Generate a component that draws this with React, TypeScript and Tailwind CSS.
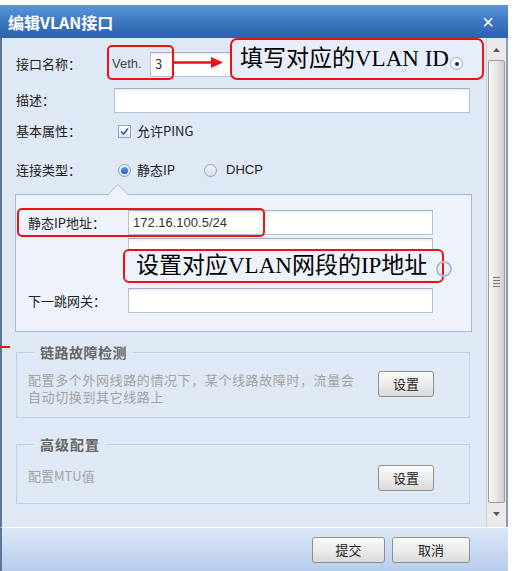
import React from "react";

const cjk = { fontFamily: '"Noto Sans CJK SC", "Liberation Sans", sans-serif' };
const note = { fontFamily: '"Liberation Serif", "Noto Sans CJK SC", serif' };

function Field({ className = "", children }: { className?: string; children?: React.ReactNode }) {
  return (
    <div
      className={`h-[25px] bg-white border border-[#b4c2d4] border-t-[#9fb0c6] shadow-[inset_0_2px_2px_rgba(0,0,0,0.06)] flex items-center px-[4px] text-[13px] text-[#333] ${className}`}
    >
      {children}
    </div>
  );
}

function Btn({ label, w }: { label: string; w: string }) {
  return (
    <div
      className={`${w} h-[26px] rounded-[3px] border border-[#8f8f8f] bg-gradient-to-b from-[#fbfbfb] via-[#ececec] to-[#d9d9d9] flex items-center justify-center text-[13px] text-[#222] shadow-[inset_0_1px_0_#fff]`}
    >
      {label}
    </div>
  );
}

function Radio({ on }: { on?: boolean }) {
  return (
    <div className="w-[13px] h-[13px] rounded-full border border-[#8da2bf] bg-gradient-to-b from-[#f2f2f2] to-[#d9dde3] flex items-center justify-center">
      {on && <div className="w-[7px] h-[7px] rounded-full bg-gradient-to-b from-[#5fa3e8] to-[#1d5fb3]" />}
    </div>
  );
}

export default function App() {
  return (
    <div className="relative w-[519px] h-[571px] bg-white overflow-hidden" style={cjk}>
      <div className="pt-[5px] w-[508px]">
        {/* title bar */}
        <div className="h-[33px] bg-gradient-to-b from-[#5d97d9] via-[#3d77c2] to-[#2d62ac] flex items-center justify-between pl-[8px] pr-[14px]">
          <span className="text-white font-bold text-[16px] leading-[20px]">编辑VLAN接口</span>
          <span className="text-white text-[20px] leading-[20px]" style={{ fontFamily: '"Liberation Sans", sans-serif' }}>
            ×
          </span>
        </div>

        {/* body */}
        <div className="flex h-[489px] bg-[#dfe8f5] border-l-2 border-[#5f7597] border-r-2 border-r-[#8a9bb3]">
          <div className="relative flex-1 pl-[14px] pt-[12px] text-[13px] leading-[16px] text-[#222]">
            <div className="h-[28px] flex items-center">
              <span className="w-[96px]">接口名称：</span>
              <span className="w-[38px] text-[#444]" style={{ fontFamily: '"Liberation Sans", sans-serif' }}>
                Veth.
              </span>
              <Field className="w-[320px]">3</Field>
            </div>
            <div className="mt-[8px] h-[28px] flex items-center">
              <span className="w-[98px]">描述：</span>
              <Field className="w-[356px]" />
            </div>
            <div className="mt-[4px] h-[26px] flex items-center">
              <span className="w-[102px]">基本属性：</span>
              <div className="w-[13px] h-[13px] border border-[#8ca3c2] bg-gradient-to-b from-[#ffffff] to-[#e3e8ef] flex items-center justify-center">
                <svg width="11" height="11" viewBox="0 0 11 11">
                  <path d="M2 5.5 L4.5 8 L9 2.5" fill="none" stroke="#2a5ea8" strokeWidth="1.6" />
                </svg>
              </div>
              <span className="ml-[6px]">允许PING</span>
            </div>
            <div className="mt-[13px] h-[26px] flex items-center">
              <span className="w-[102px]">连接类型：</span>
              <Radio on />
              <span className="ml-[6px] w-[67px]">静态IP</span>
              <Radio />
              <span className="ml-[9px]" style={{ fontFamily: '"Liberation Sans", sans-serif' }}>
                DHCP
              </span>
            </div>

            {/* static ip panel */}
            <div className="relative mt-[11px] -ml-px w-[457px] h-[138px] bg-[#eef3fb] border border-[#a9b9d0] pt-[15px] pl-[12px]">
              <svg className="absolute -top-[11px] left-[91px]" width="22" height="12" viewBox="0 0 22 12">
                <path d="M0 11.5 L11 0.5 L22 11.5" fill="#eef3fb" stroke="#a9b9d0" />
              </svg>
              <div className="h-[25px] flex items-center">
                <span className="w-[100px]">静态IP地址：</span>
                <Field className="w-[305px]">
                  <span style={{ fontFamily: '"Liberation Sans", sans-serif' }}>172.16.100.5/24</span>
                </Field>
              </div>
              <div className="mt-[3px] h-[25px] flex items-center">
                <span className="w-[100px]" />
                <Field className="w-[305px]" />
              </div>
              <div className="mt-[25px] h-[25px] flex items-center">
                <span className="w-[100px]">下一跳网关：</span>
                <Field className="w-[305px]" />
              </div>
            </div>

            {/* link fault detection */}
            <div className="relative mt-[20px] w-[454px] h-[66px] border border-[#c2cfe0] pt-[18px] pl-[11px] pr-[35px] flex justify-between">
              <span className="absolute -top-[9px] left-[17px] px-[6px] bg-[#dfe8f5] text-[14px] font-bold text-[#666] leading-[16px] tracking-[0.5px]">
                链路故障检测
              </span>
              <div className="text-[#a3a3a3] text-[13px] leading-[17px] tracking-[0.6px]">
                <div>配置多个外网线路的情况下，某个线路故障时，流量会</div>
                <div>自动切换到其它线路上</div>
              </div>
              <Btn label="设置" w="w-[56px] h-[25px]" />
            </div>

            {/* advanced */}
            <div className="relative mt-[26px] w-[454px] h-[60px] border border-[#c2cfe0] pl-[11px] pr-[35px] flex justify-between">
              <span className="absolute -top-[9px] left-[17px] px-[6px] bg-[#dfe8f5] text-[14px] font-bold text-[#666] leading-[16px] tracking-[1px]">
                高级配置
              </span>
              <div className="pt-[23px] text-[#a3a3a3] text-[13px] leading-[16px]">配置MTU值</div>
              <div className="pt-[20px]">
                <Btn label="设置" w="w-[56px] h-[25px]" />
              </div>
            </div>
          </div>

          {/* scrollbar */}
          <div className="w-[20px] bg-[#e9e9e9] border-l border-[#cfcfcf] flex flex-col items-center py-[2px]">
            <div className="h-[20px] flex items-center justify-center">
              <svg width="7" height="4" viewBox="0 0 7 4">
                <path d="M0 4 L3.5 0 L7 4 Z" fill="#555" />
              </svg>
            </div>
            <div className="w-[17px] flex-1 rounded-[2px] border border-[#9c9c9c] bg-gradient-to-r from-[#f7f7f7] via-[#e6e6e6] to-[#cfcfcf] flex items-center justify-center">
              <div className="flex flex-col gap-[2px]">
                <div className="w-[7px] h-px bg-[#777]" />
                <div className="w-[7px] h-px bg-[#777]" />
                <div className="w-[7px] h-px bg-[#777]" />
                <div className="w-[7px] h-px bg-[#777]" />
              </div>
            </div>
            <div className="h-[22px] flex items-center justify-center">
              <svg width="7" height="4" viewBox="0 0 7 4">
                <path d="M0 0 L3.5 4 L7 0 Z" fill="#555" />
              </svg>
            </div>
          </div>
        </div>

        {/* footer */}
        <div className="h-[44px] border-t border-white border-l-2 border-l-[#5f7597] bg-gradient-to-b from-[#dce8f7] to-[#b6cdec] flex items-start justify-end gap-[7px] pr-[38px] pt-[9px]">
          <Btn label="提交" w="w-[73px]" />
          <Btn label="取消" w="w-[78px]" />
        </div>
      </div>

      {/* annotations */}
      <div className="absolute left-[107px] top-[45px] w-[67px] h-[35px] border-[2.5px] border-[#ee1111] rounded-[5px]" />
      <svg className="absolute left-[173px] top-[56px]" width="52" height="13" viewBox="0 0 52 13">
        <line x1="0" y1="6.5" x2="40" y2="6.5" stroke="#ee1111" strokeWidth="2.5" />
        <path d="M38 1 L50 6.5 L38 12 Z" fill="#ee1111" />
      </svg>
      <div
        className="absolute left-[230px] top-[38px] w-[254px] h-[42px] border-[2.5px] border-[#ee1111] rounded-[7px] bg-[#e7eef9] flex items-center pl-[8px] text-[23px] text-black leading-[26px]"
        style={note}
      >
        填写对应的VLAN ID
      </div>
      <div className="absolute left-[450px] top-[57px] w-[13px] h-[13px] rounded-full border border-[#8ea9cc] bg-white flex items-center justify-center">
        <div className="w-[4px] h-[4px] rounded-full bg-[#1a2a44]" />
      </div>

      <div className="absolute left-[17px] top-[208px] w-[248px] h-[29px] border-[2.5px] border-[#ee1111] rounded-[5px]" />
      <div
        className="absolute left-[123px] top-[249px] w-[321px] h-[34px] border-[2.5px] border-[#ee1111] rounded-[6px] bg-[#eef3fb] flex items-center pl-[11px] text-[23px] text-black leading-[26px]"
        style={note}
      >
        设置对应VLAN网段的IP地址
      </div>
      <div className="absolute left-[436px] top-[261px] w-[16px] h-[16px] rounded-full border-2 border-[#a9c0dd]" />

      <div className="absolute left-0 top-[346px] w-[10px] h-[2px] bg-[#ee1111]" />
    </div>
  );
}
